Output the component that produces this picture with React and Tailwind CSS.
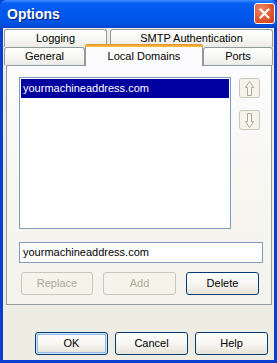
import React from 'react';

const FONT = { fontFamily: '"Liberation Sans", Arial, sans-serif' };

function Tab({ label, className = '' }) {
  return (
    <div
      className={`flex items-center justify-center rounded-t-[3px] border border-b-0 border-[#919b9c] bg-[linear-gradient(180deg,#ffffff_0%,#f7f7f4_50%,#ecebe6_100%)] text-[11px] text-black ${className}`}
    >
      {label}
    </div>
  );
}

function XpButton({ children, disabled, isDefault, className = '' }) {
  if (disabled) {
    return (
      <button
        type="button"
        className={`flex h-[23px] items-center justify-center rounded-[3px] border border-[#c9c7ba] bg-[#f5f4ea] text-[11px] text-[#aca899] ${className}`}
      >
        {children}
      </button>
    );
  }
  return (
    <button
      type="button"
      className={`flex h-[23px] items-center justify-center rounded-[3px] border border-[#003c74] bg-[linear-gradient(180deg,#ffffff_0%,#f5f4f0_55%,#e6e3d8_100%)] text-[11px] text-black ${
        isDefault ? 'shadow-[inset_0_0_0_1px_#cee7ff,inset_0_0_0_2px_#98b8ea]' : ''
      } ${className}`}
    >
      {children}
    </button>
  );
}

function ArrowButton({ down }) {
  return (
    <div className="flex h-[20px] w-[21px] items-center justify-center rounded-[3px] border border-[#c9c7ba] bg-[#f5f4ea]">
      <svg width="9" height="15" viewBox="0 0 9 15" className={down ? 'rotate-180' : ''}>
        <polygon
          points="4.5,0.5 8.5,6.5 6.5,6.5 6.5,14.5 2.5,14.5 2.5,6.5 0.5,6.5"
          fill="#fbfbf7"
          stroke="#aca899"
          strokeWidth="1"
        />
      </svg>
    </div>
  );
}

export default function App() {
  return (
    <div className="flex h-[363px] w-[277px] flex-col bg-[#0a3fd0]" style={FONT}>
      {/* title bar */}
      <div className="flex h-[28px] items-center justify-between rounded-t-[6px] bg-[linear-gradient(180deg,#3d8dff_0%,#0a5ff2_12%,#0058ee_40%,#0054e3_80%,#0146cf_100%)] pl-[7px] pr-[2px]">
        <span className="text-[14px] font-bold text-white [text-shadow:1px_1px_0_#0a1e7a]">Options</span>
        <div className="mb-[1px] flex h-[21px] w-[21px] items-center justify-center rounded-[3px] border border-white bg-[radial-gradient(circle_at_35%_30%,#f08a6a_0%,#e2552e_55%,#c4401d_100%)]">
          <svg width="11" height="11" viewBox="0 0 11 11">
            <path d="M1.5 1.5 L9.5 9.5 M9.5 1.5 L1.5 9.5" stroke="white" strokeWidth="2" strokeLinecap="square" />
          </svg>
        </div>
      </div>

      {/* body */}
      <div className="mx-[3px] mb-[3px] flex flex-1 flex-col bg-[#efede3]">
        <div className="mt-[1px] flex h-[18px]">
          <Tab label="Logging" className="ml-[1px] w-[103px]" />
          <Tab label="SMTP Authentication" className="ml-[3px] w-[163px]" />
        </div>
        <div className="flex h-[18px] items-end">
          <Tab label="General" className="ml-[1px] h-[18px] w-[81px]" />
          <div className="relative z-10 -mb-[1px] flex h-[22px] w-[118px] flex-col rounded-t-[3px] border border-b-0 border-[#919b9c] bg-[#fcfcfe] text-[11px]">
            <div className="-mx-[1px] -mt-[1px] h-[3px] rounded-t-[3px] bg-[linear-gradient(180deg,#e68b2c_0%,#ffc73c_100%)]" />
            <div className="flex flex-1 items-center justify-center pb-[1px]">Local Domains</div>
          </div>
          <Tab label="Ports" className="h-[18px] w-[70px]" />
        </div>

        {/* tab page */}
        <div className="ml-[3px] flex h-[240px] w-[266px] flex-col border border-[#919b9c] bg-[linear-gradient(180deg,#fcfcfe_0%,#f7f6f1_50%,#f4f3ee_100%)] pl-[12px] pt-[11px]">
          <div className="flex">
            <div className="h-[152px] w-[212px] border border-[#7f9db9] bg-white p-[1px]">
              <div className="flex h-[19px] items-center bg-[#0000a0] pl-[2px] text-[11px] text-white">
                yourmachineaddress.com
              </div>
            </div>
            <div className="ml-[8px] mt-[1px] flex flex-col gap-[12px]">
              <ArrowButton />
              <ArrowButton down />
            </div>
          </div>
          <div className="mt-[13px] flex h-[21px] w-[244px] items-center border border-[#7f9db9] bg-white pl-[3px] text-[11px]">
            yourmachineaddress.com
          </div>
          <div className="mt-[9px] ml-[2px] flex gap-[10px]">
            <XpButton disabled className="w-[72px]">Replace</XpButton>
            <XpButton disabled className="w-[73px]">Add</XpButton>
            <XpButton className="w-[73px]">Delete</XpButton>
          </div>
        </div>

        <div className="mt-[27px] ml-[32px] flex gap-[7px]">
          <XpButton isDefault className="w-[73px]">OK</XpButton>
          <XpButton className="w-[73px]">Cancel</XpButton>
          <XpButton className="w-[73px]">Help</XpButton>
        </div>
      </div>
    </div>
  );
}
